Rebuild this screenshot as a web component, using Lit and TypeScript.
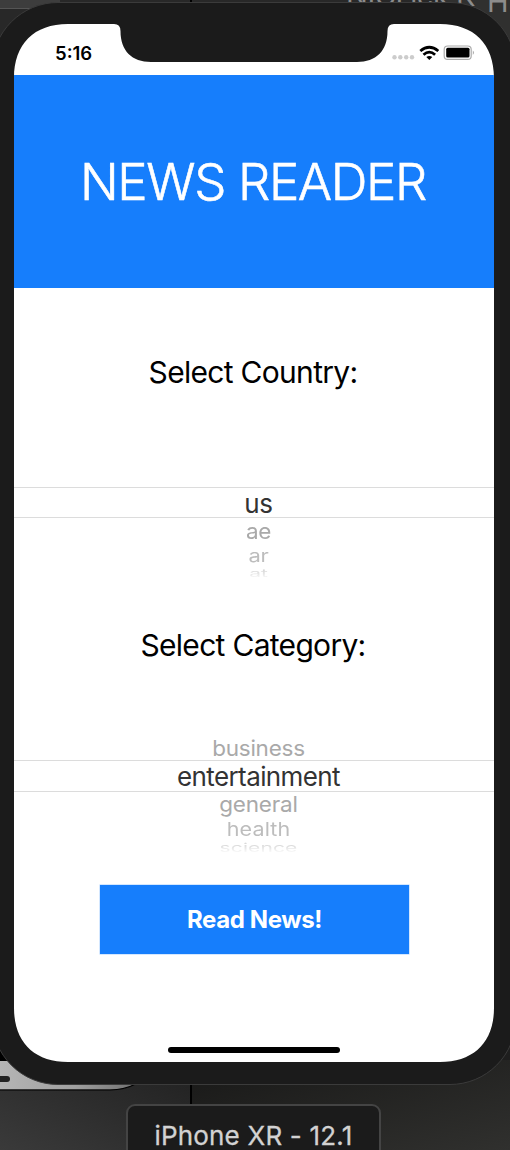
import { LitElement, html, css, svg } from "lit";
import { customElement } from "lit/decorators.js";
import { styleMap } from "lit/directives/style-map.js";

interface Row { t: string; h: number; w: number; s: number; sy: number; c: string; ls: number; dy: number; }

@customElement("wheel-picker")
class WheelPicker extends LitElement {
  static properties = { rows: { attribute: false } };
  declare rows: Row[];
  static styles = css`
    :host { display: flex; flex-direction: column; align-items: center; width: 100%; }
    .row { width: 100%; box-sizing: border-box; display: flex; align-items: center; justify-content: center; overflow: visible; flex: none; }
    .sel { border-top: 1px solid #dcdcdc; border-bottom: 1px solid #dcdcdc; }
    .fade { -webkit-mask-image: linear-gradient(#000 5%, transparent 85%); mask-image: linear-gradient(#000 5%, transparent 85%); }
    span { display: block; white-space: nowrap; line-height: 1; padding-left: 9px; }
  `;
  render() {
    return this.rows.map((r) => html`<div class="row ${r.w ? "sel" : ""} ${r.sy < 0.6 ? "fade" : ""}" style=${styleMap({ height: r.h + "px" })}>
      <span style=${styleMap({ fontSize: r.s + "px", color: r.c, letterSpacing: r.ls + "px", transform: `translateY(${r.dy}px) scaleY(${r.sy})` })}>${r.t}</span></div>`);
  }
}

@customElement("app-root")
class AppRoot extends LitElement {
  static styles = css`
    :host { display: block; position: relative; width: 510px; height: 1150px; overflow: hidden; background: #1e1e1e; font-family: Inter, sans-serif; }
    .art { position: absolute; left: 0; top: 0; }
    .screen { position: absolute; left: 14px; top: 24px; width: 480px; height: 1038px; display: flex; flex-direction: column; align-items: center; background: #fff;
      clip-path: path("M0 54C0 20 20 0 54 0H100Q106.500 0 106.500 7C106.500 27 118 38 137 38H343C362 38 373.500 27 373.500 7Q373.500 0 380 0H426C460 0 480 20 480 54V984C480 1018 460 1038 426 1038H54C20 1038 0 1018 0 984Z"); }
    .status { width: 100%; height: 51px; box-sizing: border-box; display: flex; padding: 19px 19px 0 41px; justify-content: space-between; flex: none; }
    .time { font-size: 18.500px; line-height: 20px; font-weight: 600; letter-spacing: 0; }
    .hero { width: 100%; height: 213px; box-sizing: border-box; display: flex; align-items: center; justify-content: center; background: #167efc; color: #fff; flex: none; font-weight: 300; -webkit-text-stroke: 0.6px #fff; font-size: 51px; letter-spacing: -1.400px; padding-right: 2px; white-space: nowrap; }
    .label { font-size: 30px; line-height: 40px; white-space: nowrap; letter-spacing: -0.7px; padding-right: 2px; color: #000; flex: none; }
    .country { margin-top: 64px; }
    .category { margin-top: 43px; }
    .p1 { margin-top: 95px; height: 95px; flex: none; }
    .p2 { margin-top: 69px; height: 119px; flex: none; }
    .button { width: 309px; height: 69px; margin-top: 32px; margin-left: 1px; display: flex; align-items: center; justify-content: center; background: #167efc; color: #fff; font-weight: 700; font-size: 24px; letter-spacing: -0.4px; flex: none; box-shadow: 0 0 0 0.5px #a8d0ff; }
    .home { width: 172px; height: 6px; border-radius: 3px; background: #000; margin-top: auto; margin-bottom: 9px; }
    .tip { position: absolute; left: 126px; top: 1104px; width: 255px; height: 70px; box-sizing: border-box; border: 2px solid #444; border-radius: 9px; background: #1b1b1b; color: #d2d2d2; -webkit-text-stroke: 0.3px #d2d2d2; text-align: center; font-size: 26px; letter-spacing: 0.2px; line-height: 60px; white-space: nowrap; }
    .behind { position: absolute; left: 343px; top: -13px; display: flex; gap: 12px; color: #8c8c8c; font-size: 29px; line-height: 30px; white-space: nowrap; }
    .behind span:first-child { margin-top: -6px; width: 132px; text-align: right; letter-spacing: -0.5px; }
  `;
  country: Row[] = [
    { t: "us", h: 31, w: 1, s: 26, sy: 1, c: "#333", ls: -0.2, dy: 1 },
    { t: "ae", h: 27, w: 0, s: 22.5, sy: 0.97, c: "#a9a9a9", ls: -0.4, dy: 0 },
    { t: "ar", h: 22, w: 0, s: 22, sy: 0.8, c: "#bdbdbd", ls: -0.2, dy: 0 },
    { t: "at", h: 15, w: 0, s: 21, sy: 0.52, c: "#cecece", ls: 0, dy: -1 },
  ];
  category: Row[] = [
    { t: "business", h: 26, w: 0, s: 22.5, sy: 0.95, c: "#a9a9a9", ls: -0.25, dy: 1 },
    { t: "entertainment", h: 32, w: 1, s: 26, sy: 1, c: "#333", ls: -0.6, dy: 1 },
    { t: "general", h: 27, w: 0, s: 22.5, sy: 0.95, c: "#a9a9a9", ls: -0.2, dy: -1 },
    { t: "health", h: 22, w: 0, s: 21.5, sy: 0.86, c: "#bdbdbd", ls: 0.1, dy: 0 },
    { t: "science", h: 15, w: 0, s: 21, sy: 0.55, c: "#cecece", ls: 0.1, dy: -1 },
  ];
  render() {
    return html`
      <svg class="art" width="510" height="1150">
        <defs>
          <linearGradient id="bl" x1="0" x2="1" y1="1" y2="0"><stop stop-color="#3a3a3a"/><stop offset="1" stop-color="#202020"/></linearGradient>
          <linearGradient id="br" x1="0" x2="1" y1="0" y2="1"><stop stop-color="#181817"/><stop offset="1" stop-color="#30302e"/></linearGradient>
          <linearGradient id="ph"><stop stop-color="#b5b5b5"/><stop offset=".5" stop-color="#a0a0a0"/><stop offset="1" stop-color="#666"/></linearGradient>
        </defs>
        <rect width="510" height="60" fill="#282828"/>
        <rect width="60" height="8" fill="#3d3d3d"/><rect y="8" width="60" height="1" fill="#555"/>
        <rect x="190" width="2" height="3" fill="#000"/>
        <rect x="440" width="70" height="60" fill="#30302f"/>
        <rect y="1060" width="191" height="90" fill="url(#bl)"/>
        <rect x="191" y="1060" width="319" height="90" fill="url(#br)"/>
        <rect x="190" y="1080" width="2" height="30" fill="#000"/>
        <rect y="1040" width="30" height="22" fill="#000"/>
        <path d="M0 1061H150C142 1083 132 1089.500 110 1089.500H0Z" fill="url(#ph)"/>
        <path d="M0 1090H110C122 1090 130 1087 138 1083" fill="none" stroke="#000" stroke-width="1.200"/>
        <rect x="-10" y="1076" width="20" height="6" rx="3" fill="#222"/>
      </svg>
      <div class="behind"><span>NICI ick K</span><span>H</span></div>
      <svg class="art" width="510" height="1150">
        <rect x="-8" y="2.500" width="524" height="1082" rx="66" fill="#1b1b1b" stroke="#3b3b3b"/>
      </svg>
      <div class="screen">
        <div class="status"><span class="time">5:16</span>
          <svg width="84" height="24" viewBox="0 0 84 24">
            ${[3.5, 9.3, 15.2, 21].map((x) => svg`<circle cx=${x} cy="14.300" r="2.200" fill="#ccc"/>`)}
            <g fill="none" stroke="#000" stroke-width="2.800"><path d="M29.300 8Q38.300 0.500 47.300 8"/><path d="M32.500 11.700Q38.300 6.500 44.100 11.700"/></g>
            <path d="M35.300 14Q38.300 11.800 41.300 14L38.300 17Z"/>
            <rect x="53.200" y="3" width="27" height="13.400" rx="3.500" fill="#fff" stroke="#aaa" stroke-width="1.200"/><rect x="55.200" y="4.800" width="23.300" height="9.800" rx="1.500"/><path d="M81.800 7.500V11.900Q84.200 9.700 81.800 7.500" fill="#aaa"/>
          </svg></div>
        <div class="hero">NEWS READER</div>
        <div class="label country">Select Country:</div>
        <wheel-picker class="p1" .rows=${this.country}></wheel-picker>
        <div class="label category">Select Category:</div>
        <wheel-picker class="p2" .rows=${this.category}></wheel-picker>
        <div class="button">Read News!</div>
        <div class="home"></div>
      </div>
      <div class="tip">iPhone XR - 12.1</div>`;
  }
}
